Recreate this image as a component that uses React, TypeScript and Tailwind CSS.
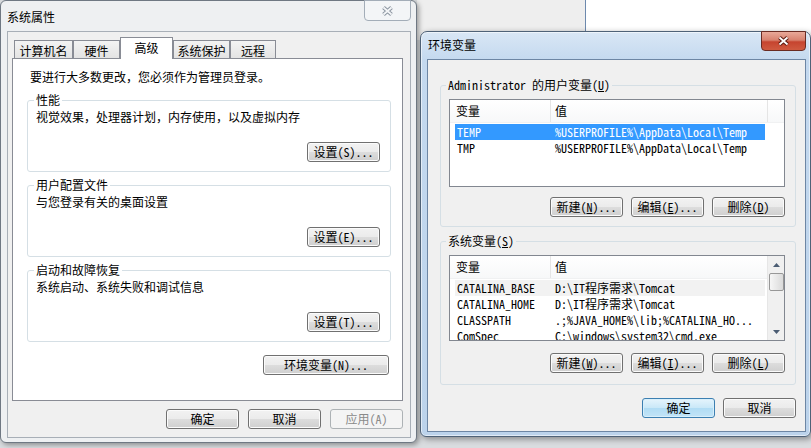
import React from "react";

type Kind = "normal" | "default" | "disabled";

function Btn({ children, w = "w-[73px]", kind = "normal" }: { children: React.ReactNode; w?: string; kind?: Kind }) {
  const skin =
    kind === "default"
      ? "border-[#3c7fb1] bg-[linear-gradient(#e5f4fc_0%,#c9e8f8_50%,#b0dcf4_50%,#c2e4f7_100%)] shadow-[inset_0_0_0_1px_#d8effb]"
      : kind === "disabled"
      ? "border-[#adb2b5] bg-[#f4f4f4] text-[#8a8a8a]"
      : "border-[#707070] bg-[linear-gradient(#f2f2f2_0%,#ebebeb_50%,#dddddd_50%,#cfcfcf_100%)] shadow-[inset_0_0_0_1px_#fbfbfb]";
  return (
    <div className={`${w} h-[20px] flex items-center justify-center rounded-[3px] border leading-[14px] ${skin}`}>
      {children}
    </div>
  );
}

function CloseX({ active }: { active: boolean }) {
  const d = "M2.5 1.5 L10.5 8.5 M10.5 1.5 L2.5 8.5";
  return (
    <svg width="13" height="10" viewBox="0 0 13 10">
      <path d={d} stroke={active ? "#5a1a10" : "#8b95a0"} strokeWidth="3.8" fill="none" />
      <path d={d} stroke={active ? "#ffffff" : "#f4f6f8"} strokeWidth="1.8" fill="none" />
    </svg>
  );
}

function Group({ title, desc, btn }: { title: string; desc: string; btn: string }) {
  return (
    <fieldset className="w-[364px] h-[79px] border border-[#d5dfe5] rounded-[3px] pl-[6px] pr-[10px]">
      <legend className="px-[2px] leading-[14px]">{title}</legend>
      <div className="ml-[2px] mt-[3px] leading-[14px]">{desc}</div>
      <div className="mt-[18px] flex justify-end">
        <Btn>{btn}</Btn>
      </div>
    </fieldset>
  );
}

type Row = { name: string; value: string; tone?: "sel" | "focus" };

function ListView({ rows, tall, scroll }: { rows: Row[]; tall: boolean; scroll?: boolean }) {
  return (
    <div className={`ml-[3px] w-[336px] ${tall ? "h-[88px]" : "h-[86px]"} border border-[#828790] bg-white flex overflow-hidden`}>
      <div className="flex-1 min-w-0">
        <div className="h-[23px] flex bg-[linear-gradient(#ffffff,#f7f8f9)] border-b border-[#f0f1f2]">
          <div className="w-[101px] pl-[6px] flex items-center border-r border-[#e5e5e5]">变量</div>
          <div className={`${scroll ? "w-[216px]" : "w-[217px] border-r border-[#e5e5e5]"} pl-[4px] flex items-center`}>值</div>
        </div>
        <div className="pt-[1px]">
          {rows.map((r) => (
            <div
              key={r.name}
              className={`ml-[5px] w-[310px] h-[16px] flex items-center whitespace-nowrap ${
                r.tone === "sel" ? "bg-[#3399ff] text-white" : r.tone === "focus" ? "bg-[#f2f2f2]" : ""
              }`}
            >
              <div className="w-[95px] pl-[2px]">{r.name}</div>
              <div className="pl-[5px] overflow-hidden">{r.value}</div>
            </div>
          ))}
        </div>
      </div>
      {scroll && (
        <div className="w-[17px] h-full bg-[#f0f0f0] border-l border-[#e6e6e6] flex flex-col items-center">
          <div className="h-[17px] flex items-center justify-center">
            <svg width="7" height="4" viewBox="0 0 7 4">
              <path d="M0 4 L3.5 0 L7 4Z" fill="#4b5d73" />
            </svg>
          </div>
          <div className="w-[15px] h-[18px] rounded-[2px] border border-[#979797] bg-[linear-gradient(90deg,#f6f6f6,#dadada)]" />
          <div className="flex-1" />
          <div className="h-[17px] flex items-center justify-center">
            <svg width="7" height="4" viewBox="0 0 7 4">
              <path d="M0 0 L3.5 4 L7 0Z" fill="#4b5d73" />
            </svg>
          </div>
        </div>
      )}
    </div>
  );
}

const tabs = [
  { t: "计算机名", w: "w-[59px]" },
  { t: "硬件", w: "w-[47px]" },
  { t: "高级", w: "w-[53px]", sel: true },
  { t: "系统保护", w: "w-[57px]" },
  { t: "远程", w: "w-[46px]" },
];

function SystemProps() {
  return (
    <div className="absolute left-0 top-0 w-[417px] h-[443px] rounded-[6px] border border-[#6f7883] bg-[#eef0f2] shadow-[2px_2px_5px_rgba(0,0,0,0.35)]">
      <div className="h-[30px] pl-[6px] pt-[9px] leading-[14px]">系统属性</div>
      <div className="absolute left-[363px] top-[-1px] w-[47px] h-[21px] rounded-b-[4px] border border-[#a3adb8] bg-[#f3f5f7] flex items-center justify-center">
        <CloseX active={false} />
      </div>
      <div className="ml-[6px] w-[404px] h-[407px] border border-[#a8afb7] bg-[#f0f0f0] flex flex-col">
        <div className="mt-[5px] ml-[6px] h-[21px] flex items-end">
          {tabs.map((t) =>
            t.sel ? (
              <div
                key={t.t}
                className={`${t.w} h-[22px] -mb-[1px] relative z-10 border border-b-0 border-[#898c95] bg-white flex justify-center pt-[3px] leading-[14px]`}
              >
                {t.t}
              </div>
            ) : (
              <div
                key={t.t}
                className={`${t.w} h-[18px] border border-b-0 border-[#898c95] bg-[linear-gradient(#f3f3f3,#e3e3e3)] flex justify-center pt-[3px] leading-[14px]`}
              >
                {t.t}
              </div>
            )
          )}
        </div>
        <div className="ml-[4px] w-[391px] h-[343px] border border-[#898c95] bg-white flex flex-col">
          <div className="pl-[17px] pt-[11px] leading-[14px]">要进行大多数更改，您必须作为管理员登录。</div>
          <div className="ml-[14px] mt-[9px] flex flex-col gap-[6px]">
            <Group title="性能" desc="视觉效果，处理器计划，内存使用，以及虚拟内存" btn="设置(S)..." />
            <Group title="用户配置文件" desc="与您登录有关的桌面设置" btn="设置(E)..." />
            <Group title="启动和故障恢复" desc="系统启动、系统失败和调试信息" btn="设置(T)..." />
          </div>
          <div className="mt-[13px] pr-[13px] flex justify-end">
            <Btn w="w-[126px]">环境变量(N)...</Btn>
          </div>
        </div>
        <div className="mt-[8px] pr-[7px] flex justify-end gap-[9px]">
          <Btn>确定</Btn>
          <Btn>取消</Btn>
          <Btn kind="disabled">应用(A)</Btn>
        </div>
      </div>
    </div>
  );
}

const userRows: Row[] = [
  { name: "TEMP", value: "%USERPROFILE%\\AppData\\Local\\Temp", tone: "sel" },
  { name: "TMP", value: "%USERPROFILE%\\AppData\\Local\\Temp" },
];

const sysRows: Row[] = [
  { name: "CATALINA_BASE", value: "D:\\IT程序需求\\Tomcat", tone: "focus" },
  { name: "CATALINA_HOME", value: "D:\\IT程序需求\\Tomcat" },
  { name: "CLASSPATH", value: ".;%JAVA_HOME%\\lib;%CATALINA_HO..." },
  { name: "ComSpec", value: "C:\\windows\\system32\\cmd.exe" },
];

function EnvVars() {
  return (
    <div className="absolute left-[420px] top-[31px] w-[391px] h-[406px] rounded-t-[7px] rounded-b-[6px] border border-[#4f6277] bg-[linear-gradient(180deg,#d9e7f5_0%,#c4d9ef_7%,#bcd3eb_100%)] shadow-[inset_0_0_0_1px_rgba(255,255,255,0.55),2px_2px_6px_rgba(0,0,0,0.4)]">
      <div className="h-[27px] pl-[7px] pt-[6px] leading-[14px]">环境变量</div>
      <div className="absolute left-[340px] top-[-1px] w-[45px] h-[20px] rounded-b-[4px] border border-[#6a2b22] bg-[linear-gradient(#e9a999_0%,#d8826f_45%,#c6442f_55%,#cf5a40_100%)] flex items-center justify-center">
        <CloseX active />
      </div>
      <div className="ml-[6px] w-[379px] h-[373px] border border-[#6d86a4] bg-[#f0f0f0] pt-[18px] pl-[12px]">
        <fieldset className="w-[356px] h-[149px] border border-[#d5dfe5] rounded-[3px] pl-[5px]">
          <legend className="px-[2px] leading-[14px]">
            Administrator 的用户变量(<u>U</u>)
          </legend>
          <div className="mt-[7px]">
            <ListView rows={userRows} tall />
          </div>
          <div className="mt-[10px] ml-[3px] w-[336px] flex justify-end gap-[8px]">
            <Btn>
              新建(<u>N</u>)...
            </Btn>
            <Btn>
              编辑(<u>E</u>)...
            </Btn>
            <Btn>
              删除(<u>D</u>)
            </Btn>
          </div>
        </fieldset>
        <fieldset className="mt-[7px] w-[356px] h-[151px] border border-[#d5dfe5] rounded-[3px] pl-[5px]">
          <legend className="px-[2px] leading-[14px]">
            系统变量(<u>S</u>)
          </legend>
          <div className="mt-[7px]">
            <ListView rows={sysRows} tall={false} scroll />
          </div>
          <div className="mt-[12px] ml-[3px] w-[336px] flex justify-end gap-[8px]">
            <Btn>
              新建(<u>W</u>)...
            </Btn>
            <Btn>
              编辑(<u>I</u>)...
            </Btn>
            <Btn>
              删除(<u>L</u>)
            </Btn>
          </div>
        </fieldset>
        <div className="mt-[13px] w-[356px] flex justify-end gap-[8px]">
          <Btn kind="default">确定</Btn>
          <Btn>取消</Btn>
        </div>
      </div>
    </div>
  );
}

export default function App() {
  return (
    <div className="relative w-[811px] h-[448px] overflow-hidden bg-[#d9dcdf] text-[12px] text-black font-['Noto_Sans_Mono_CJK_SC','Noto_Sans_CJK_SC',monospace]">
      <div className="absolute left-[417px] top-0 w-[394px] h-[40px] flex">
        <div className="w-[168px] bg-[#eeeeee]" />
        <div className="w-px bg-[#6d89ad]" />
        <div className="flex-1 bg-white" />
      </div>
      <SystemProps />
      <EnvVars />
    </div>
  );
}
